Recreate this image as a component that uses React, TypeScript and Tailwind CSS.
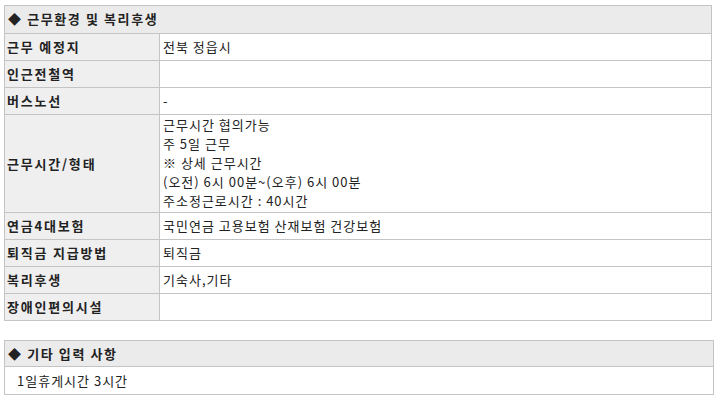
const rows: { label: string; value: string[] }[] = [
  { label: "근무 예정지", value: ["전북 정읍시"] },
  { label: "인근전철역", value: [] },
  { label: "버스노선", value: ["-"] },
  {
    label: "근무시간/형태",
    value: [
      "근무시간 협의가능",
      "주 5일 근무",
      "※ 상세 근무시간",
      "(오전) 6시 00분~(오후) 6시 00분",
      "주소정근로시간 : 40시간",
    ],
  },
  { label: "연금4대보험", value: ["국민연금 고용보험 산재보험 건강보험"] },
  { label: "퇴직금 지급방법", value: ["퇴직금"] },
  { label: "복리후생", value: ["기숙사,기타"] },
  { label: "장애인편의시설", value: [] },
];

export default function App() {
  return (
    <div
      className="min-h-screen bg-white pt-[5px] pl-[4px] text-[13px] text-[#222] tracking-[1px]"
      style={{ fontFamily: '"Noto Sans CJK KR", "Noto Sans", sans-serif' }}
    >
      {/* 근무환경 및 복리후생 */}
      <div className="w-[708px] border border-[#c4c4c4]">
        <div className="h-[28px] flex items-center pl-[3px] pb-[1px] bg-[#ebebeb] border-b border-[#c4c4c4] font-bold tracking-[1.6px]">
          ◆ 근무환경 및 복리후생
        </div>
        {rows.map((row, i) => (
          <div
            key={row.label}
            className={`grid grid-cols-[155px_1fr] ${i < rows.length - 1 ? "border-b border-[#c4c4c4]" : ""}`}
          >
            <div className="flex items-center pl-[2px] bg-[#efefef] border-r border-[#c4c4c4] font-bold tracking-[1.8px] min-h-[26px]">
              {row.label}
            </div>
            <div
              className={`flex flex-col justify-center pl-[3px] min-h-[26px] ${row.value.length > 1 ? "pb-[2px]" : ""}`}
            >
              {row.value.map((v) => (
                <div key={v} className={row.value.length > 1 ? "leading-[19px]" : "leading-[18px]"}>
                  {v}
                </div>
              ))}
            </div>
          </div>
        ))}
      </div>

      {/* 기타 입력 사항 */}
      <div className="mt-[19px] w-[710px] border border-[#c4c4c4]">
        <div className="h-[26px] flex items-center pl-[3px] bg-[#ebebeb] border-b border-[#c4c4c4] font-bold tracking-[1.6px]">
          ◆ 기타 입력 사항
        </div>
        <div className="h-[27px] flex items-center pl-[12px]">1일휴게시간 3시간</div>
      </div>
    </div>
  );
}
